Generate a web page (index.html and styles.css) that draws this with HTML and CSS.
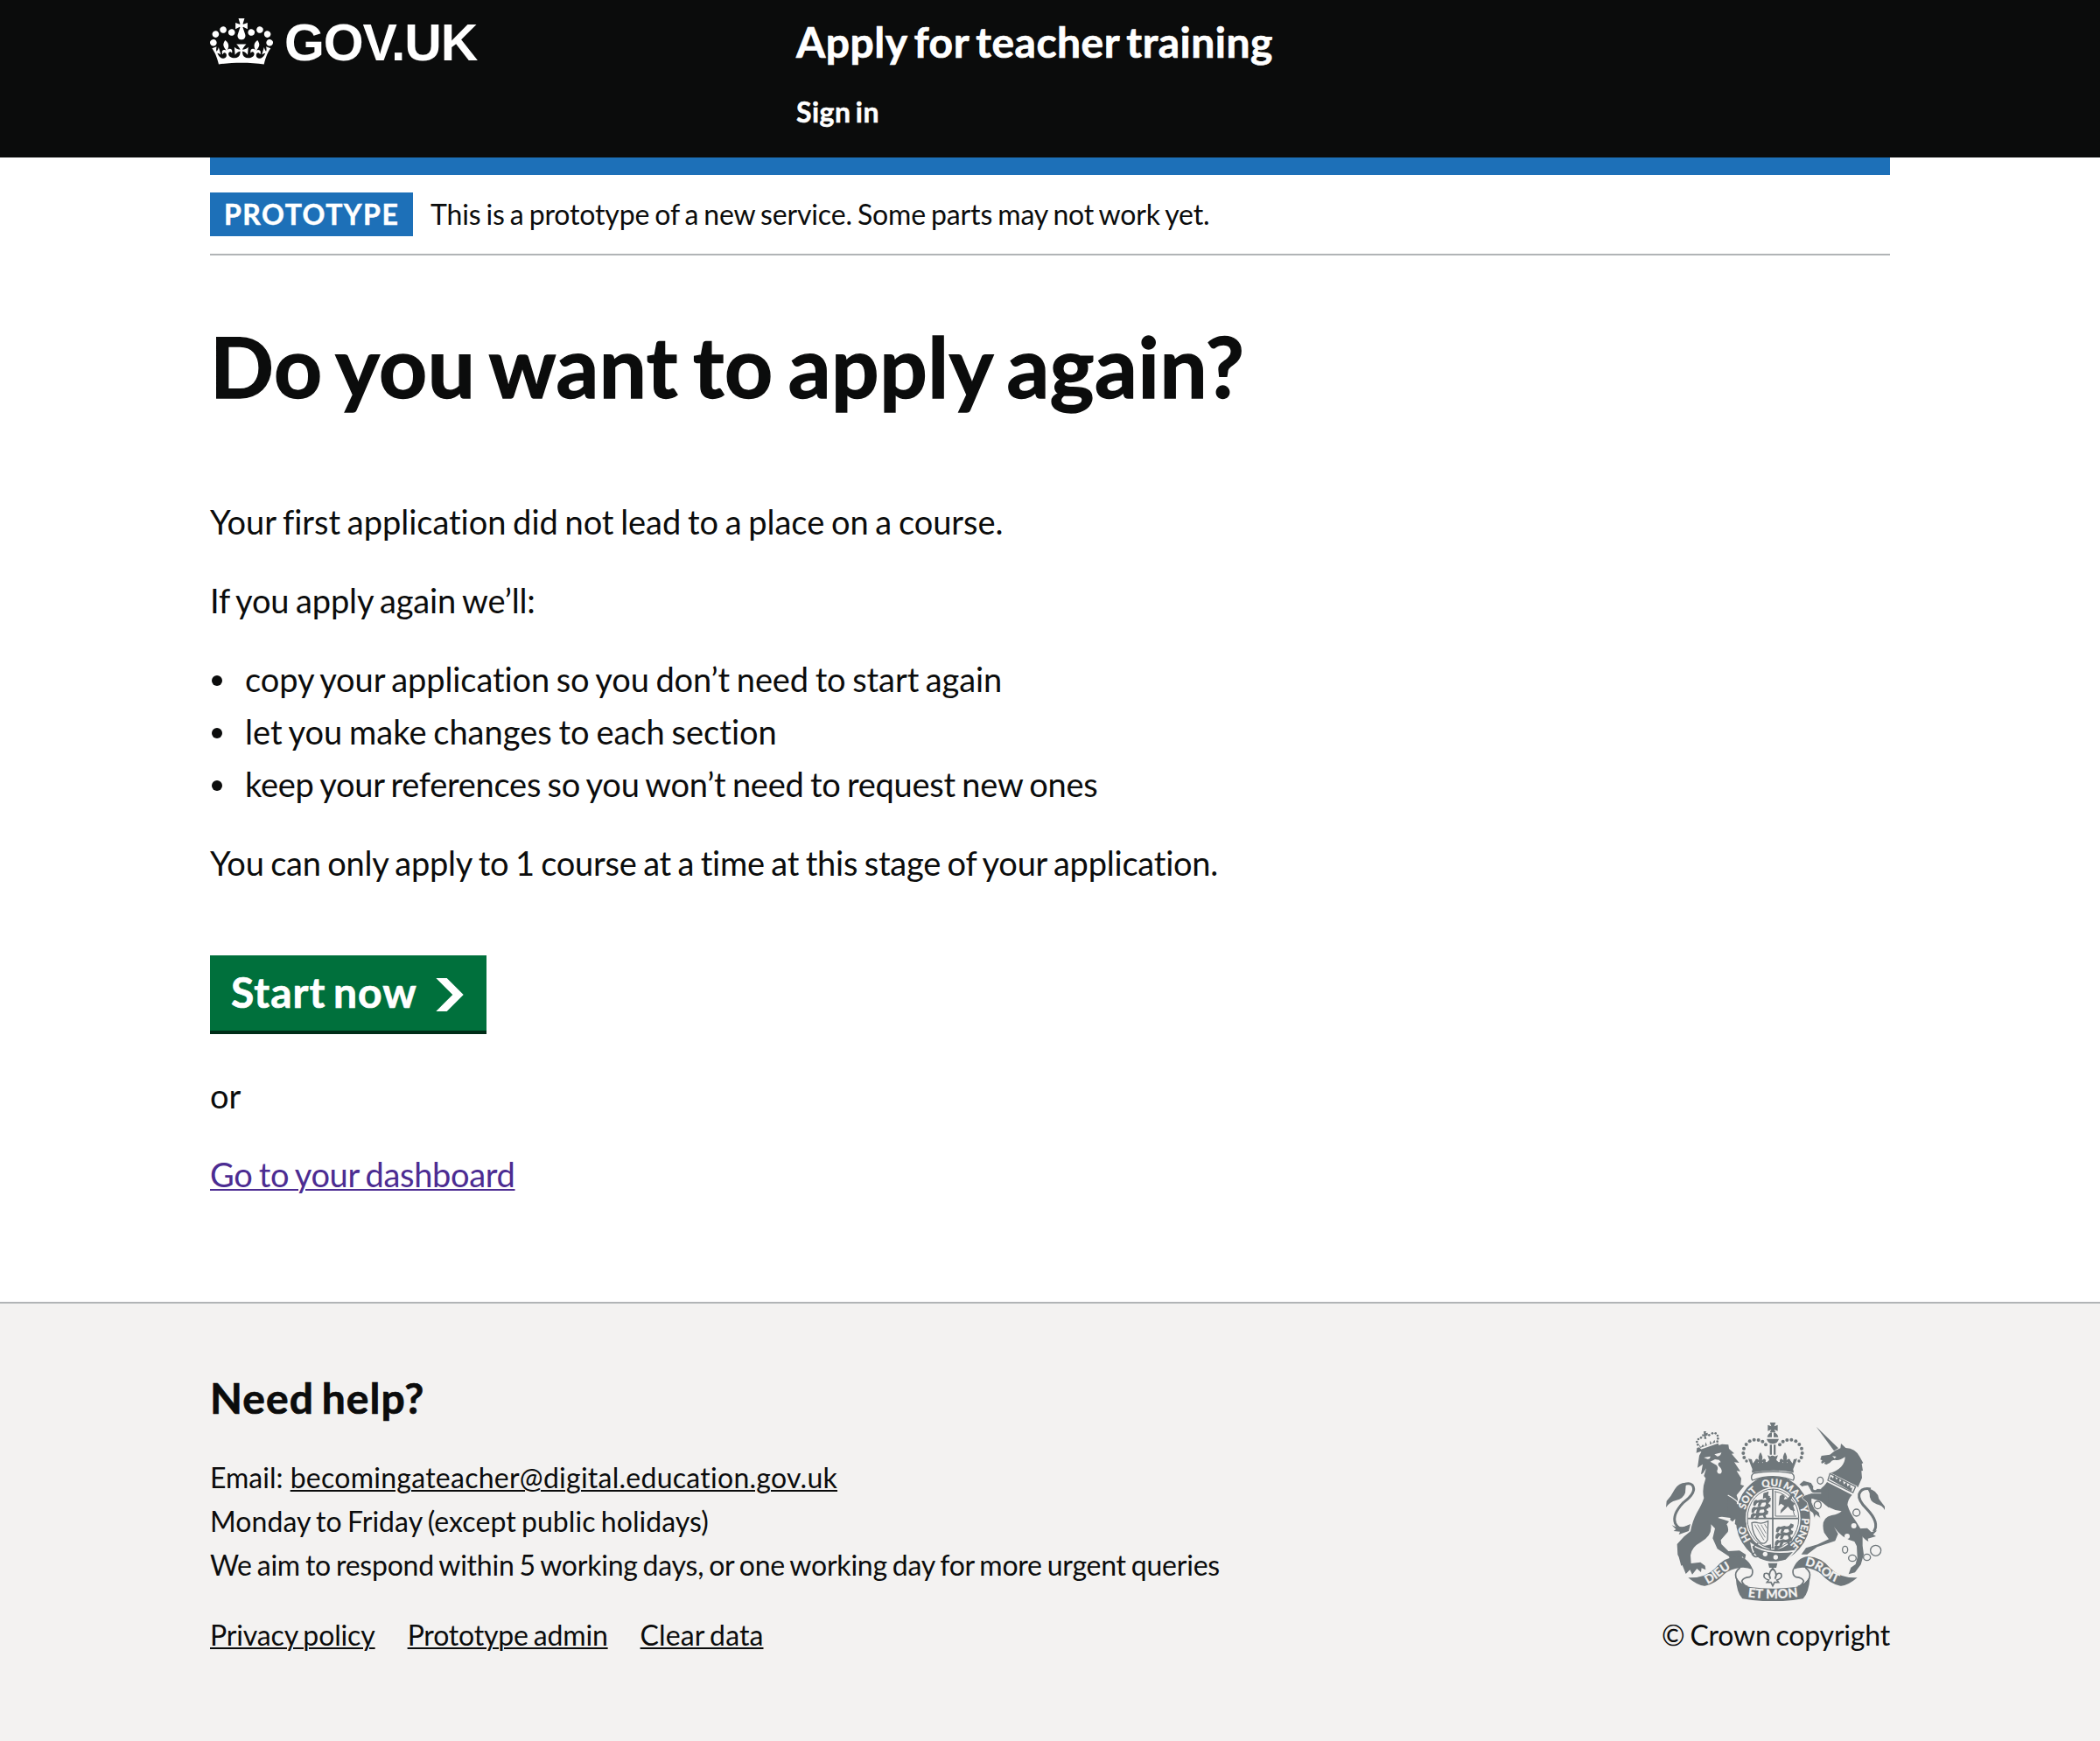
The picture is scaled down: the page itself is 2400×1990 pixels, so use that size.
FILE: index.html
```html
<!DOCTYPE html>
<html lang="en">
<head>
<meta charset="utf-8">
<title>Do you want to apply again? - Apply for teacher training - GOV.UK</title>
<link rel="stylesheet" href="styles.css">
</head>
<body>
<header class="header">
  <div class="container header-inner">
    <a class="logo" href="#">
      <svg class="logo-crown" viewBox="0 0 132 97" aria-hidden="true"><path fill="currentColor" fill-rule="evenodd" d="M25 30.2c3.5 1.5 7.7-.2 9.1-3.7 1.5-3.6-.2-7.8-3.9-9.2-3.6-1.4-7.6.3-9.1 3.9-1.4 3.5.3 7.5 3.9 9zM9 39.5c3.6 1.5 7.8-.2 9.2-3.7 1.5-3.6-.2-7.8-3.9-9.1-3.6-1.5-7.6.2-9.1 3.8-1.4 3.5.3 7.5 3.8 9zM4.4 57.2c3.5 1.5 7.7-.2 9.1-3.8 1.5-3.6-.2-7.7-3.9-9.1-3.5-1.5-7.6.3-9.1 3.8-1.4 3.5.3 7.6 3.9 9.1zm38.3-21.4c3.5 1.5 7.7-.2 9.1-3.8 1.5-3.6-.2-7.7-3.9-9.1-3.6-1.5-7.6.3-9.1 3.8-1.3 3.6.4 7.7 3.9 9.1zm64.4-5.6c-3.6 1.5-7.8-.2-9.1-3.7-1.5-3.6.2-7.8 3.8-9.2 3.6-1.4 7.7.3 9.2 3.9 1.3 3.5-.4 7.5-3.9 9zm15.9 9.3c-3.6 1.5-7.7-.2-9.1-3.7-1.5-3.6.2-7.8 3.7-9.1 3.6-1.5 7.7.2 9.2 3.8 1.5 3.5-.3 7.5-3.8 9zm4.7 17.7c-3.6 1.5-7.8-.2-9.2-3.8-1.5-3.6.2-7.7 3.9-9.1 3.6-1.5 7.7.3 9.2 3.8 1.3 3.5-.4 7.6-3.9 9.1zM89.3 35.8c-3.6 1.5-7.8-.2-9.2-3.8-1.4-3.6.2-7.7 3.9-9.1 3.6-1.5 7.7.3 9.2 3.8 1.4 3.6-.3 7.7-3.9 9.1zM69.7 17.7l8.9 4.7V9.3l-8.9 2.8c-.2-.3-.5-.6-.9-.9L72.4 0H59.6l3.5 11.2c-.3.3-.6.5-.9.9l-8.8-2.8v13.1l8.8-4.7c.3.3.6.7.9.9l-5 15.4v.1c-.2.8-.4 1.6-.4 2.4 0 4.1 3.1 7.5 7 8.1h.2c.3 0 .7.1 1 .1.4 0 .7 0 1-.1h.2c4-.6 7.1-4.1 7.1-8.1 0-.8-.1-1.7-.4-2.4V34l-5.1-15.4c.4-.2.7-.6 1-.9zM66 92.8c16.9 0 32.8 1.1 47.1 3.2 4-16.9 8.9-26.7 14-33.5l-9.6-3.4c1 4.9 1.1 7.2 0 10.2-1.5-1.4-3-4.3-4.2-8.7L108.6 76c2.8-2 5-3.2 7.5-3.3-4.4 9.4-10 11.9-13.6 11.2-4.3-.8-6.3-4.6-5.6-7.9 1-4.7 5.7-5.9 8-.5 4.3-8.7-3-11.4-7.6-8.8 7.1-7.2 7.9-13.5 2.1-21.1-8 6.1-8.1 12.3-4.5 20.8-4.7-5.4-12.1-2.5-9.5 6.2 3.4-5.2 7.9-2 7.2 3.1-.6 4.3-6.4 7.8-13.5 7.2-10.3-.9-10.9-8-11.2-13.8 2.5-.5 7.1 1.8 11 7.3L80.2 60c-4.1 4.4-8 5.3-12.3 5.4 1.4-4.4 8-11.6 8-11.6H55.5s6.4 7.2 7.9 11.6c-4.2-.1-8-1-12.3-5.4l1.4 16.4c3.9-5.5 8.5-7.7 10.9-7.3-.3 5.8-.9 12.8-11.1 13.8-7.2.6-12.9-2.9-13.5-7.2-.7-5 3.8-8.3 7.1-3.1 2.7-8.7-4.6-11.6-9.4-6.2 3.7-8.5 3.6-14.7-4.6-20.8-5.8 7.6-5 13.9 2.2 21.1-4.7-2.6-11.9.1-7.7 8.8 2.3-5.5 7.1-4.2 8.1.5.7 3.3-1.3 7.1-5.7 7.9-3.5.7-9-1.8-13.5-11.2 2.5.1 4.7 1.3 7.5 3.3l-4.7-15.4c-1.2 4.4-2.7 7.2-4.3 8.7-1.1-3-.9-5.3 0-10.2l-9.5 3.4c5 6.9 9.9 16.7 14 33.5 14.8-2.1 30.8-3.2 47.7-3.2z"/></svg>
      <span class="logo-text">GOV.UK</span>
    </a>
    <div class="header-content">
      <a class="service-name" href="#">Apply for teacher training</a>
      <nav><a class="nav-link" href="#">Sign in</a></nav>
    </div>
  </div>
</header>

<div class="container">
  <div class="blue-bar"></div>
  <div class="phase-banner">
    <strong class="tag">PROTOTYPE</strong>
    <span class="phase-text">This is a prototype of a new service. Some parts may not work yet.</span>
  </div>
  <main class="main">
    <h1 class="heading">Do you want to apply again?</h1>
    <p class="body t-first">Your first application did not lead to a place on a course.</p>
    <p class="body t-if">If you apply again we’ll:</p>
    <ul class="list">
      <li class="t-copy">copy your application so you don’t need to start again</li>
      <li class="t-let">let you make changes to each section</li>
      <li class="t-keep">keep your references so you won’t need to request new ones</li>
    </ul>
    <p class="body t-only">You can only apply to 1 course at a time at this stage of your application.</p>
    <a class="button" href="#">Start now
      <svg class="button-arrow" viewBox="0 0 33 40" aria-hidden="true"><path fill="currentColor" d="M0 0h13l20 20-20 20H0l20-20z"/></svg>
    </a>
    <p class="body">or</p>
    <p class="body"><a class="link-visited" href="#">Go to your dashboard</a></p>
  </main>
</div>

<footer class="footer">
  <div class="container footer-inner">
    <div class="footer-main">
      <h2 class="footer-heading">Need help?</h2>
      <ul class="footer-lines">
        <li>Email: <a class="t-email" href="#">becomingateacher@digital.education.gov.uk</a></li>
        <li class="t-hours">Monday to Friday (except public holidays)</li>
        <li class="t-aim">We aim to respond within 5 working days, or one working day for more urgent queries</li>
      </ul>
      <div class="footer-links">
        <a class="l1" href="#">Privacy policy</a>
        <a class="l2" href="#">Prototype admin</a>
        <a class="l3" href="#">Clear data</a>
      </div>
    </div>
    <div class="footer-meta">
      <svg class="crest" viewBox="42 48 750 612" aria-hidden="true">
        <defs>
          <path id="garter-line" d="M409 490A99 112 0 0 1 409 266A99 112 0 0 1 409 490"/>
          <path id="dieu-line" d="M184 602Q214 588 240 564Q262 546 300 536"/>
          <path id="mon-line" d="M318 645Q408 658 500 644"/>
          <path id="droit-line" d="M518 538Q560 546 582 570Q610 594 650 602"/>
          <path id="beast" d="M0 14q6-12 14-6l14-4q8 4 16 0l6-8 10 4-2 10-8 4 4 12h-8l-5-11-12 1-6 12h-9l4-13-6 2-6 10-7-2z"/>
          <path id="fleur" d="M0-26Q10-12 5 2 12-8 18 0q2 10-8 12 0-6-4-4l3 12H-9l3-12q-4-2-4 4-10-2-8-12 6-8 13 2-5-14 5-28z"/>
        </defs>

        <g class="ink">
          <!-- lion -->
          <path d="M146 152l18-6 70-24 22 2 2 14 18 16-9 1 26 31-17-2 21 31-13-1 16 25-2 22 12 4-26 32 20 60 18 50-14-2-10-18-12-12-6 2-46-6q-10 0-14 4 22 6 38 12l-8 10q8 14 4 26l-24 28 2 14 24 24 38-2 22 14-4 18-8-12-12 16-8-14-22 14-4-16-40-26-16-36 8-34-14-14q6 40-36 62-30 16-34 44l2 28 32-4 16 12 2 14-14-6-2 14-14-12-16 20-8-16-14 14-12-30-4 2-8-30-4-8-2-36 24-26 22-18q6-34 22-64 18-30 24-50-8-30 6-68l-6-8 8-26-12 18-6 2 6-34-18 12 6-42 10-18-10-10-8 2z"/>
          <path d="M62 400q26 16 64-4l-6 24-34 12 4-10-22-2 8-6z"/>
          <path d="M120 255q-32-6-48 22-12 24-28 40l-2 22q14-20 34-24 26-6 32-26l2-26z"/>
          <path d="M159 141l62-22 3 9-62 21z"/>
          <path d="M154 122l8 10 6-9 7 8 3-16 5 12 9-3 1-14 7 11 8-14 3 9-52 19z"/>
          <circle cx="148" cy="114" r="4"/><circle cx="153" cy="105" r="4"/><circle cx="151" cy="124" r="4"/><circle cx="162" cy="100" r="4"/><circle cx="190" cy="91" r="4"/><circle cx="201" cy="85" r="4"/><circle cx="212" cy="85" r="4"/><circle cx="219" cy="93" r="4"/><circle cx="220" cy="103" r="4"/><circle cx="218" cy="113" r="4"/>
          <path d="M171 78h9l-2 7 7-2v9l-7 1 3 11h-8v-10l-7 2v-8l6 1z"/>
          <!-- unicorn -->
          <path d="M557 62l76 74-15 9z"/>
          <path d="M604 158l18-14 18-8 2-16 16 15q34 2 48 30l12 22-5 2 4 24-5 1 2 24-14 32-98-48q26-8 40-22 14-14 14-34-20 14-34 10-12 0-18 10l-12 6-8-3 4-6-12 6-2-6 4-5-7-3 4-13z"/>
          <path d="M594 252L680 296Q666 310 664 330 672 358 694 388L716 424V470L720 500 710 535 690 562 668 568 676 545 692 534 698 510 696 472 688 456Q644 446 618 406L632 430 622 454 560 475 526 500H506L522 478 562 466 600 448 584 425Q570 375 610 366 636 362 644 352 596 346 578 318L562 300Z"/>
          <path d="M702 412l30-2 14 14 20-6-14 14 10 6-28 8 2 10q-22-12-30-34z"/>
          <path d="M732 274q36 6 40 36l20 26v12q-8-16-28-20-26-10-24-38-4-8-8-16z"/>
        </g>
        <g class="line w9">
          <path d="M122 404q-34 18-48-10-12-30 28-72 48-36 30-60-12-10-30 0"/>
          <path d="M744 276q-32-6-40 18-4 20 26 50 46 48 24 78"/>
        </g>
        <g class="paper">
          <path d="M172 168l22-4q0 10-10 9zM208 157l24-6q-4 14-14 13zM194 182l16-8 14 2 6 8q-10 0-9 10 18 18 10 28-12 6-14-8 6-12-2-20z"/>
          <path d="M612 163l14 2-6 6z"/>
          <circle cx="686" cy="402" r="9"/><circle cx="663" cy="438" r="9"/>
          <circle cx="695" cy="357" r="13"/>
          <path d="M602 218l96 48-10 28-96-46z"/>
        </g>
        <path class="ink" d="M603 242l4-10 8 8 4-14 7 18 9-8 3 16 9-10 5 18 9-9 3 16 9-7 2 14 6-4-3 14z"/>
        <g class="line w4">
          <path d="M604 223l88 45-9 20-86-42z"/>
          <ellipse cx="571" cy="247" rx="10" ry="12"/><circle cx="695" cy="357" r="12"/><ellipse cx="656" cy="484" rx="9" ry="12"/><ellipse cx="681" cy="513" rx="13" ry="11"/><ellipse cx="731" cy="510" rx="12" ry="11"/><circle cx="761" cy="487" r="18"/>
        </g>

        <!-- garter and shield -->
        <ellipse class="ink rim" cx="409" cy="377" rx="130" ry="150"/>
        <ellipse class="paper" cx="409" cy="377" rx="94" ry="107"/>
        <ellipse class="line w3" cx="409" cy="377" rx="88" ry="101"/>
        <path class="line w5" d="M408 276v204M322 377h174"/>
        <path class="line w3" d="M417 285v84h72M414 284q40 6 58 42l10 40"/>
        <g class="ink">
          <use href="#beast" x="342" y="307"/><use href="#beast" x="336" y="331"/><use href="#beast" x="333" y="352"/>
          <use href="#beast" x="420" y="398"/><use href="#beast" x="418" y="420"/><use href="#beast" x="416" y="444"/>
          <path d="M376 290l18-6-2 14 8 4-8 8 8 6-8 10 8 4v10l-8-4-6-10 4-12-8-8-8 4z"/>
          <path d="M432 300l10-6 8 8-4 10 12-2 10-12-4-8 12 10-6 14 14 12-6 8 6 18-14-4-10-12-10 10-16 14 2-12 12-14-12-8-8 8z"/>
          <path d="M376 472l26-6v18zM414 470l30 2-30 16z"/>
        </g>
        <g class="line w4">
          <path d="M336 392q10-4 22 0 16 4 34-6l-2 64q-8 18-24 10-28-26-30-68z"/>
          <path class="w2" d="M346 398l32 54M356 398l26 44M368 398l17 30M380 396l8 14"/>
        </g>
        <path class="ink rim" d="M334 464q30 24 80 28 40 2 70-4l-30 32q-50 16-92-4-22-12-28-52z"/>
        <path class="line w5" d="M358 462q-20 8-14 22 10 8-6 16 10 14 22 4"/>
        <circle class="paper" cx="382" cy="499" r="8"/><circle class="paper" cx="418" cy="510" r="8"/>
        <g class="motto">
          <text><textPath href="#garter-line" startOffset="17.5%" text-anchor="middle">HO</textPath></text>
          <text><textPath href="#garter-line" startOffset="35.5%" text-anchor="middle">SOIT</textPath></text>
          <text><textPath href="#garter-line" startOffset="49.3%" text-anchor="middle">QUI</textPath></text>
          <text><textPath href="#garter-line" startOffset="60.5%" text-anchor="middle">MAL</textPath></text>
          <text><textPath href="#garter-line" startOffset="70.5%" text-anchor="middle">Y</textPath></text>
          <text><textPath href="#garter-line" startOffset="82.5%" text-anchor="middle">PENSE</textPath></text>
        </g>
        <!-- forelegs that overlap the garter -->
        <path class="ink" d="M256 300q40 26 52 70l10 26-4 12-10 0-6-14-8 10-12-8 2-18-10 10-8-6 2-18-10 6-2-40z"/>
        <path class="paper-line" d="M254 297q28 14 42 34"/>
        <path class="ink leg" d="M498 260L514 247 540 254 552 274 590 276 592 296 556 296 540 286 528 264 508 268Z"/>
        <path class="ink leg" d="M582 290L540 290 516 298 508 306 526 322 533 350 545 358 551 377 556 364 572 377 567 356 552 344 542 322 542 310 582 322Z"/>
        <path class="ink" d="M596 254L574 274V318L600 340Z"/>
        <circle class="paper" cx="553" cy="273" r="7"/>
        <ellipse class="paper line w4" cx="562" cy="331" rx="12" ry="13"/>

        <!-- imperial crown -->
        <g class="ink">
          <path d="M398 48h20l-5 13 12-5v21l-12-5 5 10h-20l5-10-12 5V56l12 5z"/>
          <path d="M389 98q3-14 16-16v16zM411 82q13 2 16 16h-16zM387 104h42q-5 17-21 17t-21-17z"/>
          <path d="M398 124h7v34h-7zM411 124h7v34h-7z"/>
          <path d="M324 172l12 2 4 14 8-10 6 4 12 10 12-10 10 2 8-8-6-16 10 4q4-6 16 0l10-4-6 16 8 8 10-2 12 10 12-10 6-4 8 10 4-14 12-2-14 36 2 12q-70-16-144 0l2-12z"/>
          <use href="#fleur" x="366" y="176"/><use href="#fleur" x="450" y="176"/>
          <circle cx="318" cy="180" r="5"/><circle cx="310" cy="168" r="6"/><circle cx="307" cy="153" r="6"/><circle cx="309" cy="137" r="6"/><circle cx="317" cy="123" r="6"/><circle cx="329" cy="112" r="6"/><circle cx="344" cy="107" r="6"/><circle cx="359" cy="108" r="6"/><circle cx="373" cy="113" r="6"/><circle cx="384" cy="124" r="6"/>
          <circle cx="498" cy="180" r="5"/><circle cx="506" cy="168" r="6"/><circle cx="509" cy="153" r="6"/><circle cx="507" cy="137" r="6"/><circle cx="499" cy="123" r="6"/><circle cx="487" cy="112" r="6"/><circle cx="472" cy="107" r="6"/><circle cx="457" cy="108" r="6"/><circle cx="443" cy="113" r="6"/><circle cx="432" cy="124" r="6"/>
        </g>
        <path class="paper line w4" d="M342 222q66-12 132 0 12 10 4 24-70-26-140 0-8-14 4-24z"/>

        <!-- scrolls -->
        <g class="ink">
          <path d="M118 580q58 2 92-32 34-40 78-41 36 4 52 46-22-10-44-7-34 4-54 22-30 34-66 40-22 2-58-28z"/>
          <path d="M698 580q-58 2-92-32-34-40-78-41-36 4-52 46 22-10 44-7 34 4 54 22 30 34 66 40 22 2 58-28z"/>
          <path d="M281 576q18 32 50 36 76 10 154 0 32-4 51-36-4 56-24 76-104 18-208 0-20-20-23-76z"/>
          <path d="M392 530h32l-4 16h-24z"/>
        </g>
        <g class="line w5">
          <path d="M296 546q-20 14-14 34 10 24 40 32M338 552q4 20-10 26-22 2-26 14 6 16 20 18"/>
          <path d="M520 546q20 14 14 34-10 24-40 32M478 552q-4 20 10 26 22 2 26 14-6 16-20 18"/>
          <path d="M408 548q18 18 8 36 4-24 20-18 8 16-14 22l6 8h-14l-6 12-6-12h-14l6-8q-22-6-14-22 16-6 20 18-10-18 8-36z"/>
        </g>
        <g class="motto big">
          <text><textPath href="#dieu-line">DIEU</textPath></text>
          <text class="et"><textPath href="#mon-line" startOffset="50%" text-anchor="middle">ET MON</textPath></text>
          <text><textPath href="#droit-line">DROIT</textPath></text>
        </g>
      </svg>
      <span class="copyright">© Crown copyright</span>
    </div>
  </div>
</footer>
</body>
</html>
```
FILE: styles.css
```css
* { box-sizing: border-box; }

body {
  margin: 0;
  background: #fff;
  color: #0b0c0c;
  font-family: Lato, "Liberation Sans", sans-serif;
  font-size: 38px;
  line-height: 50px;
  word-spacing: -2px;
}

h1, h2, p, ul { margin: 0; padding: 0; }
ul { list-style: none; }
a {
  color: inherit;
  text-decoration-thickness: 2px;
  text-underline-offset: 2px;
}

.container { width: 1920px; margin: 0 auto; }

/* header */
.header { height: 180px; background: #0b0c0c; color: #fff; }
.header a { text-decoration: none; }
.header-inner { display: flex; }
.logo { display: flex; align-items: flex-start; width: 670px; padding-top: 21px; }
.logo-crown { width: 72px; height: 53px; }
.logo-text {
  margin: 0 0 0 13px;
  font: bold 59px/57px "Liberation Sans", Arial, sans-serif;
  letter-spacing: -1.2px;
}
.header-content { display: flex; flex-direction: column; gap: 30px; padding-top: 18px; }
.service-name {
  font-size: 48px;
  font-weight: 700;
  line-height: 60px;
  letter-spacing: .5px;
  word-spacing: -4px;
  -webkit-text-stroke: .7px currentColor;
}
.nav-link {
  display: block;
  font-size: 32px;
  font-weight: 700;
  line-height: 40px;
  letter-spacing: .5px;
  word-spacing: -3px;
  -webkit-text-stroke: .5px currentColor;
}

/* phase banner */
.blue-bar { height: 20px; background: #1d70b8; }
.phase-banner {
  display: flex;
  gap: 20px;
  height: 92px;
  padding: 20px 0;
  border-bottom: 2px solid #b1b4b6;
  font-size: 32px;
}
.tag {
  width: 232px;
  height: 50px;
  padding-left: 16px;
  background: #1d70b8;
  color: #fff;
  letter-spacing: 1.5px;
  line-height: 49px;
  -webkit-text-stroke: .5px currentColor;
}
.phase-text { letter-spacing: -.14px; }

/* content */
.main { padding: 76px 0 121px; }
.heading {
  margin-bottom: 103px;
  font-size: 96px;
  line-height: 100px;
  letter-spacing: .6px;
  word-spacing: -7px;
  -webkit-text-stroke: 1.4px currentColor;
}
.body { margin-bottom: 40px; }
.main > .body:last-child { margin-bottom: 0; letter-spacing: -.33px; }
.t-first { letter-spacing: -.02px; }
.t-if { letter-spacing: -.14px; }
.list { display: flex; flex-direction: column; gap: 10px; margin-bottom: 40px; }
.list li { display: flex; align-items: center; }
.list li::before {
  content: "";
  width: 12px;
  height: 12px;
  margin: 4px 26px 0 2px;
  border-radius: 50%;
  background: currentColor;
}
.t-copy { letter-spacing: -.09px; }
.t-let { letter-spacing: .02px; }
.t-keep { letter-spacing: -.26px; }
.t-only { letter-spacing: -.22px; }
.button {
  display: flex;
  justify-content: space-between;
  width: 316px;
  height: 86px;
  margin: 81px 0 49px;
  padding: 18px 26px 0 24px;
  background: #00703c;
  box-shadow: 0 4px 0 #002d18;
  color: #fff;
  font-size: 48px;
  font-weight: 700;
  line-height: 48px;
  letter-spacing: 1px;
  word-spacing: -4px;
  text-decoration: none;
  -webkit-text-stroke: .7px currentColor;
}
.button-arrow { width: 32px; height: 38px; margin-top: 8px; }
.link-visited { color: #4c2c92; }

/* footer */
.footer {
  height: 502px;
  border-top: 2px solid #b1b4b6;
  background: #f3f2f1;
  font-size: 32px;
}
.footer-inner { display: flex; justify-content: space-between; padding-top: 78px; }
.footer-heading {
  margin-bottom: 36px;
  font-size: 48px;
  line-height: 60px;
  letter-spacing: 1.05px;
  word-spacing: -4px;
  -webkit-text-stroke: .7px currentColor;
}
.footer-links { display: flex; gap: 37px; margin-top: 30px; }
.t-email { margin-left: 2px; letter-spacing: .26px; }
.t-hours { letter-spacing: .06px; }
.t-aim { letter-spacing: -.23px; }
.l1 { letter-spacing: -.14px; }
.l2 { letter-spacing: -.18px; }
.l3 { letter-spacing: .1px; }
.footer-meta { display: flex; flex-direction: column; align-items: flex-end; padding-top: 58px; }
.crest { width: 250px; height: 204px; margin: 0 6px 14px 0; word-spacing: 0; }
.copyright { letter-spacing: -.2px; }

.ink { fill: #6f777b; }
.paper { fill: #f3f2f1; }
.line { fill: none; stroke: #6f777b; }
.paper.line { fill: #f3f2f1; }
.paper-line { fill: none; stroke: #f3f2f1; stroke-width: 4; }
.rim { stroke: #f3f2f1; stroke-width: 5; }
.leg { stroke: #f3f2f1; stroke-width: 2.5; }
.w2 { stroke-width: 2.5; }
.w3 { stroke-width: 3; }
.w4 { stroke-width: 4; }
.w5 { stroke-width: 5; }
.w9 { stroke-width: 9; }
.motto { fill: #f3f2f1; stroke: #f3f2f1; stroke-width: 1; font: bold 34px Lato, sans-serif; }
.big { font-size: 41px; }
.et { letter-spacing: 1px; font-size: 43px; }
```
